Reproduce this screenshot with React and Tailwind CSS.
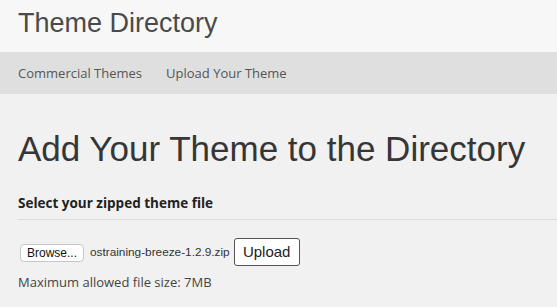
export default function App() {
  return (
    <div className="w-[557px] h-[307px] overflow-hidden bg-[#f1f1f1]">
      <header className="h-[52px] bg-[#f7f7f7] px-[18px] flex items-center">
        <div className="text-[27px] leading-none text-[#4a4a4a] font-['Liberation_Sans',Arial,sans-serif] whitespace-nowrap mt-[-5px]">
          Theme Directory
        </div>
      </header>
      <nav className="h-[42px] bg-[#dfdfdf] px-[18px] pt-[2px] flex items-center gap-[24px] font-['Open_Sans',sans-serif] text-[13px] text-[#555]">
        <span>Commercial Themes</span>
        <span>Upload Your Theme</span>
      </nav>
      <main className="pl-[18px]">
        <h1 className="mt-[37px] text-[35px] leading-none text-[#363636] font-['Liberation_Sans',Arial,sans-serif] whitespace-nowrap">
          Add Your Theme to the Directory
        </h1>
        <div className="mt-[27px] font-['Open_Sans',sans-serif] font-bold text-[13.5px] text-[#222] pb-[6px] border-b border-[#dcdcdc]">
          Select your zipped theme file
        </div>
        <div className="mt-[18px] flex items-center">
          <button className="ml-[2px] w-[64px] h-[18px] mt-[2px] bg-white border border-[#c6c6c6] rounded-[4px] text-[12px] leading-none text-[#111] font-['Liberation_Sans',Arial,sans-serif] flex items-center justify-center">
            Browse...
          </button>
          <span className="ml-[6px] mt-[1px] text-[11.8px] text-[#333] font-['Liberation_Sans',Arial,sans-serif]">
            ostraining-breeze-1.2.9.zip
          </span>
          <button className="ml-[4px] w-[66px] h-[28px] bg-white border border-[#555] rounded-[3px] text-[15px] text-[#222] font-['Liberation_Sans',Arial,sans-serif] flex items-center justify-center">
            Upload
          </button>
        </div>
        <div className="mt-[7px] font-['Open_Sans',sans-serif] text-[13px] text-[#444]">
          Maximum allowed file size: 7MB
        </div>
      </main>
    </div>
  );
}
